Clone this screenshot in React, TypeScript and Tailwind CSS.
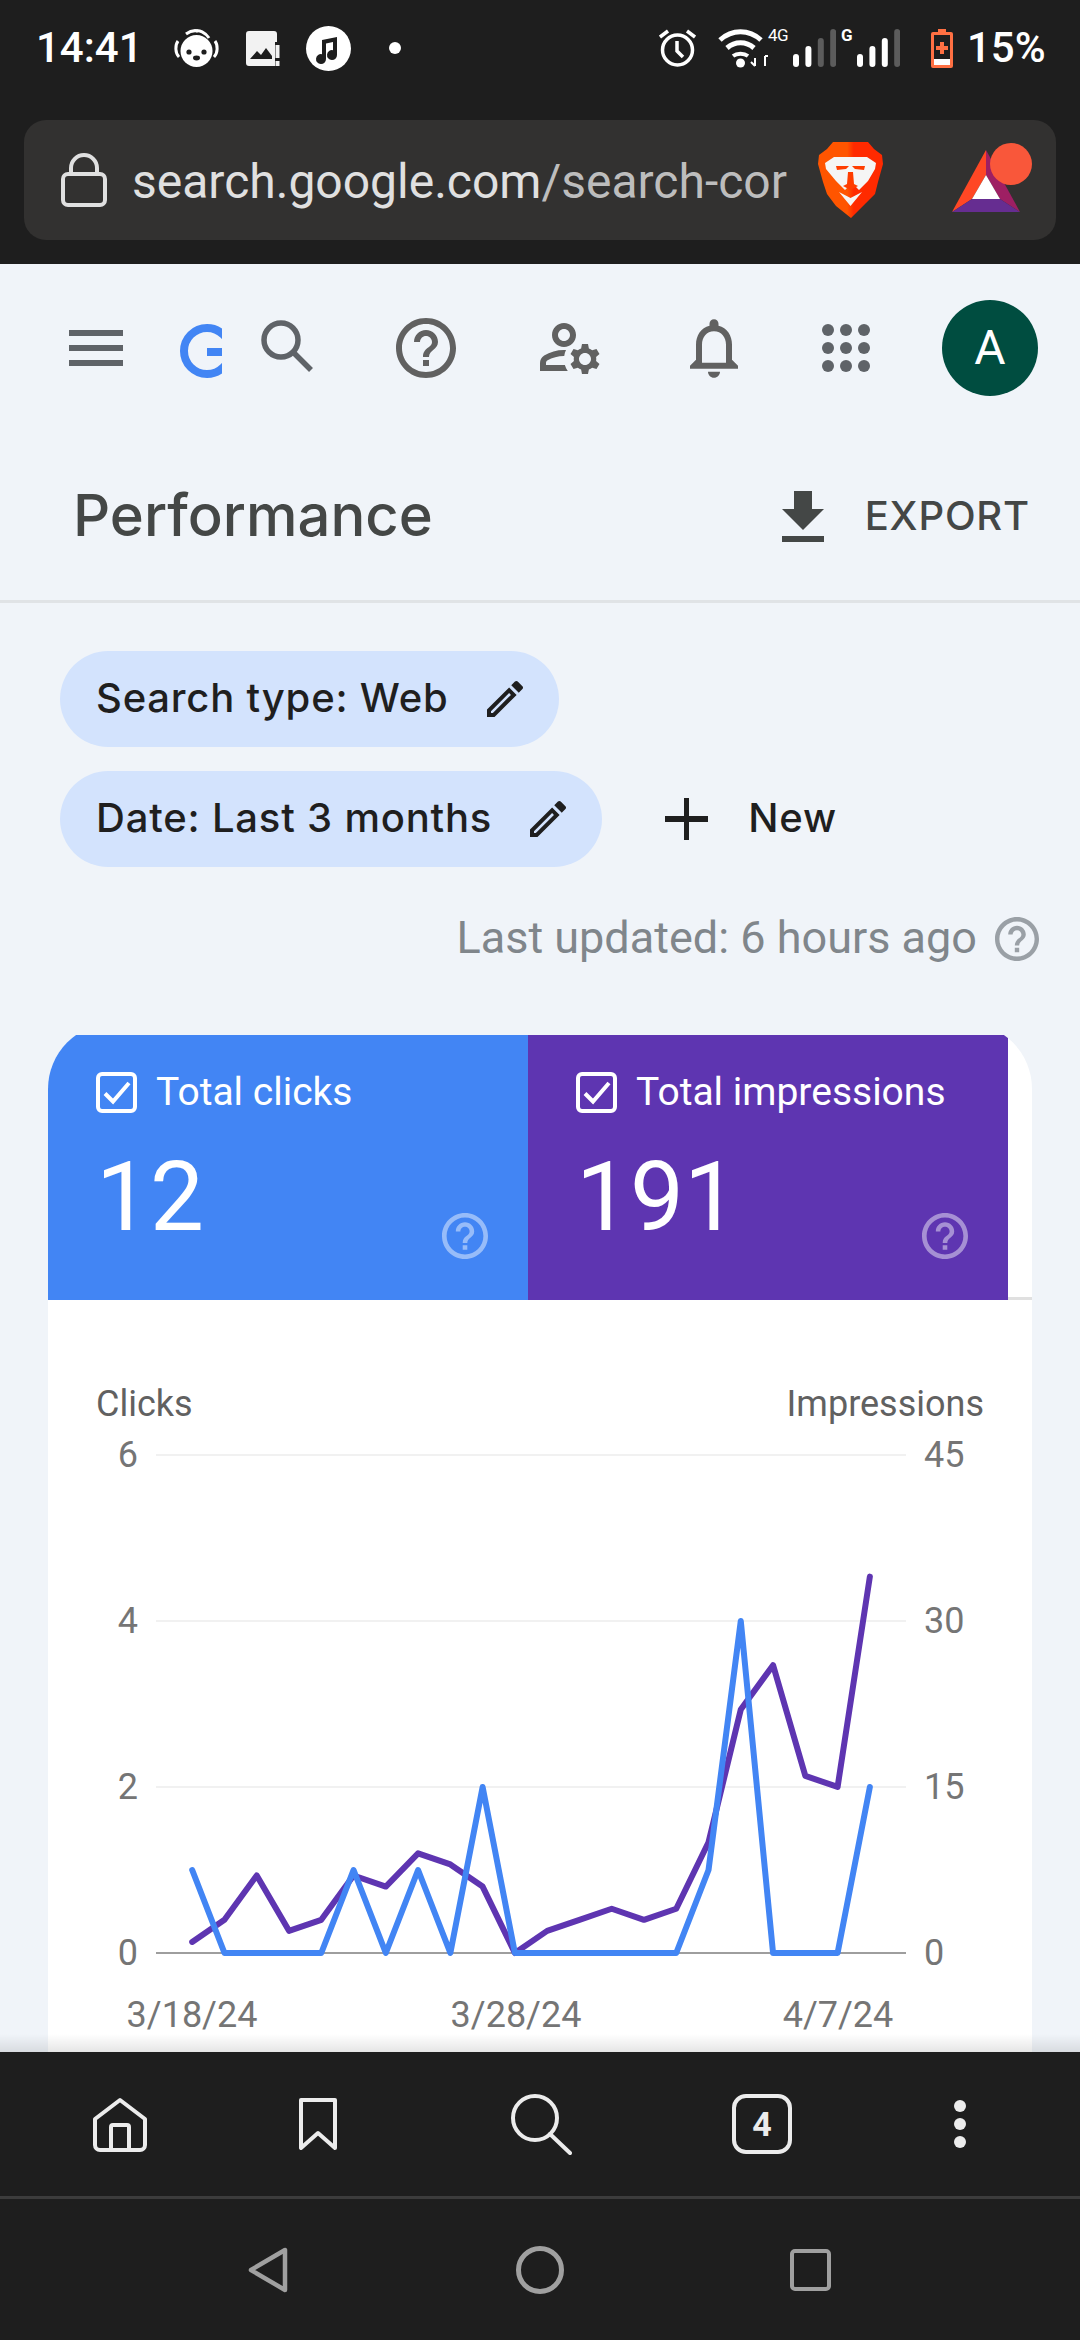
const HELP_PATH =
  'M11 18h2v-2h-2v2zm1-16C6.48 2 2 6.48 2 12s4.48 10 10 10 10-4.48 10-10S17.52 2 12 2zm0 18c-4.41 0-8-3.59-8-8s3.59-8 8-8 8 3.59 8 8-3.59 8-8 8zm0-14c-2.21 0-4 1.79-4 4h2c0-1.1.9-2 2-2s2 .9 2 2c0 2-3 1.75-3 5h2c0-2.25 3-2.5 3-5 0-2.21-1.79-4-4-4z';
const PENCIL_PATH =
  'M14.06 9.02l.92.92L5.92 19H5v-.92l9.06-9.06M17.66 3c-.25 0-.51.1-.7.29l-1.83 1.83 3.75 3.75 1.83-1.83c.39-.39.39-1.02 0-1.41l-2.34-2.34c-.2-.2-.45-.29-.71-.29zm-3.6 3.19L3 17.25V21h3.75L17.81 9.94l-3.75-3.75z';

const clicks = [1, 0, 0, 0, 0, 1, 0, 1, 0, 2, 0, 0, 0, 0, 0, 0, 1, 4, 0, 0, 0, 2];
const impressions = [1, 3, 7, 2, 3, 7, 6, 9, 8, 6, 0, 2, 3, 4, 3, 4, 10, 22, 26, 16, 15, 34];

const BASE_Y = 1953;
const points = (values: number[], perUnit: number) =>
  values.map((v, i) => `${192.2 + 32.27 * i},${BASE_Y - v * perUnit}`).join(' ');

const HelpIcon = ({ className }: { className: string }) => (
  <svg viewBox="2 2 20 20" className={className} fill="currentColor">
    <path d={HELP_PATH} />
  </svg>
);

const PencilIcon = () => (
  <svg viewBox="3 3 18 18" className="w-[36px] h-[36px] shrink-0 text-[#1f1f1f]" fill="currentColor">
    <path d={PENCIL_PATH} />
  </svg>
);

const CheckBox = () => (
  <svg viewBox="0 0 41 41" className="w-[41px] h-[41px] shrink-0" fill="none" stroke="white" strokeWidth="4">
    <rect x="2" y="2" width="37" height="37" rx="4" />
    <path d="M9 21.5 17 29.5 33 11" />
  </svg>
);

const SignalBars = ({ on }: { on: number }) => (
  <svg viewBox="0 0 43 38" className="w-[43px] h-[38px] shrink-0">
    {[25, 17, 9, 0].map((top, i) => (
      <rect key={i} x={i * 12.4} y={top} width="6" height={38 - top} rx="3" fill={i < on ? 'white' : '#5c5c5c'} />
    ))}
  </svg>
);

const StatusBar = () => (
  <div className="h-[96px] flex items-center pl-[36px] text-white">
    <span className="text-[42px] font-medium leading-none w-[138px] shrink-0">14:41</span>
    <svg viewBox="0 0 45 39" className="w-[45px] h-[39px] shrink-0">
      <path d="M5 28C1 24 1 16 4 12M40 28c4-4 4-12 1-16" stroke="white" strokeWidth="3" fill="none" />
      <path d="M22 2c3-1 9 1 13 7" stroke="white" strokeWidth="3" fill="none" />
      <circle cx="22.5" cy="22" r="16" fill="white" />
      <path d="M12 5c4-3 8-4 12-3" stroke="white" strokeWidth="3" fill="none" />
      <circle cx="15" cy="23" r="2.6" fill="#1e1e1e" />
      <circle cx="30" cy="23" r="2.6" fill="#1e1e1e" />
      <ellipse cx="22.5" cy="29" rx="3.5" ry="2.4" fill="#1e1e1e" />
    </svg>
    <svg viewBox="0 0 34 35" className="ml-[27px] w-[34px] h-[35px] shrink-0">
      <path d="M3 0h25a3 3 0 0 1 3 3v12h-2v20H3a3 3 0 0 1-3-3V3a3 3 0 0 1 3-3z" fill="#f2f2f2" />
      <path d="M4 28l7-8 4 4 5-7 6 8v3z" fill="#1e1e1e" />
      <rect x="29" y="11" width="5" height="24" fill="#1e1e1e" />
      <rect x="29.5" y="14" width="4" height="13" fill="#f2f2f2" />
      <rect x="29.5" y="30" width="4" height="5" fill="#f2f2f2" />
    </svg>
    <svg viewBox="0 0 45 45" className="ml-[26px] w-[45px] h-[45px] shrink-0">
      <circle cx="22.5" cy="22.5" r="22.5" fill="white" />
      <path d="M16 14l15-3v18a5 5 0 1 1-4-4.8V16l-7 1.5V33a5 5 0 1 1-4-4.8z" fill="#1e1e1e" />
    </svg>
    <span className="ml-[38px] w-[12px] h-[12px] rounded-full bg-white shrink-0" />
    <svg viewBox="0 0 37 38" className="ml-[258px] w-[37px] h-[38px] shrink-0" fill="none" stroke="white" strokeWidth="3.5">
      <circle cx="18.5" cy="21" r="15" />
      <path d="M18 12v10l6 6M1 8l8-6M36 8l-8-6" />
    </svg>
    <svg viewBox="0 0 50 40" className="ml-[22px] w-[50px] h-[40px] shrink-0" fill="none" stroke="white" strokeWidth="5">
      <path d="M2 12c12-11 29-11 41 0" />
      <path d="M9 20c8-7 19-7 27 0" />
      <path d="M15 28c4-3 11-3 15 0" strokeWidth="4" />
      <circle cx="22.5" cy="35" r="4.5" fill="white" stroke="none" />
      <path d="M37 30v8m-4-4 4 4M47 38v-10m0 0h3" strokeWidth="2" />
    </svg>
    <span className="text-[17px] leading-none self-start mt-[27px] w-[25px] shrink-0 tracking-[-0.5px]">4G</span>
    <SignalBars on={2} />
    <span className="text-[17px] font-bold leading-none self-start mt-[27px] ml-[5px] w-[16px] shrink-0">G</span>
    <SignalBars on={3} />
    <svg viewBox="0 0 22 39" className="ml-[31px] w-[22px] h-[39px] shrink-0">
      <path d="M7 0h8v3h5a2 2 0 0 1 2 2v32a2 2 0 0 1-2 2H2a2 2 0 0 1-2-2V5a2 2 0 0 1 2-2h5z" fill="#ff7043" />
      <rect x="3" y="6" width="16" height="24" fill="#1e1e1e" />
      <rect x="3" y="30" width="16" height="6" fill="white" />
      <path d="M9 13h4v4h4v4h-4v4H9v-4H5v-4h4z" fill="#ff7043" />
    </svg>
    <span className="ml-[14px] text-[42px] font-medium leading-none">15%</span>
  </div>
);

const BraveLogo = () => (
  <svg viewBox="0 0 65 76" className="ml-[32px] w-[65px] h-[76px] shrink-0">
    <defs>
      <linearGradient id="brave" x1="0" x2="1">
        <stop offset="0.45" stopColor="#ff5500" />
        <stop offset="0.55" stopColor="#ff2a00" />
      </linearGradient>
    </defs>
    <path d="M15 0h35l6 7 8 6 1 9-5 18-3 12-9 9-15 15-15-12-9-12-4-12L0 22l1-9 8-6z" fill="url(#brave)" />
    <path d="M16 15h33l9 6-1 6-7 12-9 9-3-3H30l-3 3-9-9-10-12-1-6z" fill="#f5f5f5" />
    <path d="M18 24h13l-3 3-9 1zM47 24H34l3 3 9 1zM30 30h5l1 12 4 2-7.500 4-7.500-4 4-2z" fill="#ff3d00" />
    <path d="M21 50l11.500 6L44 50l-11.500 14z" fill="#f5f5f5" />
  </svg>
);

const AddressBar = () => (
  <div className="mx-[24px] h-[120px] rounded-[22px] bg-[#323130] flex items-center">
    <svg viewBox="0 0 46 54" className="ml-[37px] w-[46px] h-[54px] shrink-0" fill="none" stroke="#e0e0e0" strokeWidth="4">
      <rect x="2" y="21" width="42" height="31" rx="5" />
      <path d="M10 21v-6a13 13 0 0 1 26 0v6" />
    </svg>
    <div className="ml-[25px] mt-[4px] w-[654px] whitespace-nowrap text-[48px] leading-none text-[#bdbdbd] shrink-0">
      <span className="text-[#e0e0e0]">search.google.com</span>/search-cor
    </div>
    <BraveLogo />
    <svg viewBox="0 0 80 72" className="ml-[69px] w-[80px] h-[72px] shrink-0 -mt-[2px]">
      <path d="M34 7 0 69 20 56 34 32z" fill="#ff4724" />
      <path d="M34 7v25l14 24 20 13z" fill="#9e1f63" />
      <path d="M0 69 20 56h28l20 13z" fill="#662d91" />
      <path d="M34 32 20 56h28z" fill="white" />
      <circle cx="59" cy="21" r="21" fill="#f9573a" />
    </svg>
  </div>
);

const TopBar = () => (
  <div className="h-[168px] flex items-center pl-[69px] text-[#5f6368]">
    <div className="w-[54px] flex flex-col gap-[9px] shrink-0">
      <span className="h-[6px] bg-[#5f6368]" />
      <span className="h-[6px] bg-[#5f6368]" />
      <span className="h-[6px] bg-[#5f6368]" />
    </div>
    <svg viewBox="0 0 42 54" className="ml-[57px] mt-[6px] w-[42px] h-[54px] shrink-0">
      <circle cx="27" cy="27" r="23" fill="none" stroke="#4285f4" strokeWidth="8" />
      <rect x="27" y="24" width="15" height="8" fill="#4285f4" />
    </svg>
    <svg viewBox="0 0 52 52" className="ml-[39px] -mt-[5px] w-[52px] h-[52px] shrink-0" fill="none" stroke="currentColor" strokeWidth="5.5">
      <circle cx="20" cy="20" r="17" />
      <path d="M32 32 50 50" />
    </svg>
    <HelpIcon className="ml-[83px] w-[60px] h-[60px] shrink-0 text-[#616161]" />
    <svg viewBox="2 4 20 17" className="ml-[84px] w-[60px] h-[51px] shrink-0 text-[#616161]" fill="currentColor">
      <path d="M4 18v-.65c0-.34.16-.66.41-.81C6.1 15.53 8.03 15 10 15c.03 0 .05 0 .08.01.1-.7.3-1.37.59-1.98-.22-.02-.44-.03-.67-.03-2.42 0-4.68.67-6.61 1.82-.88.52-1.39 1.5-1.39 2.53V20h9.26c-.42-.6-.75-1.28-.97-2H4zM10 12c2.21 0 4-1.79 4-4s-1.79-4-4-4-4 1.79-4 4 1.79 4 4 4zm0-6c1.1 0 2 .9 2 2s-.9 2-2 2-2-.9-2-2 .9-2 2-2zM20.75 16c0-.22-.03-.42-.06-.63l1.14-1.01-1-1.73-1.45.49c-.32-.27-.68-.48-1.08-.63L18 11h-2l-.3 1.49c-.4.15-.76.36-1.08.63l-1.45-.49-1 1.73 1.14 1.01c-.03.21-.06.41-.06.63s.03.42.06.63l-1.14 1.01 1 1.73 1.45-.49c.32.27.68.48 1.08.63L16 21h2l.3-1.49c.4-.15.76-.36 1.08-.63l1.45.49 1-1.73-1.14-1.01c.03-.21.06-.41.06-.63zM17 18c-1.1 0-2-.9-2-2s.9-2 2-2 2 .9 2 2-.9 2-2 2z" />
    </svg>
    <svg viewBox="4 2.5 16 19.5" className="ml-[90px] w-[48px] h-[59px] shrink-0 text-[#616161]" fill="currentColor">
      <path d="M12 22c1.1 0 2-.9 2-2h-4c0 1.1.9 2 2 2zm6-6v-5c0-3.07-1.63-5.64-4.5-6.32V4c0-.83-.67-1.5-1.5-1.5s-1.5.67-1.5 1.5v.68C7.64 5.36 6 7.92 6 11v5l-2 2v1h16v-1l-2-2zm-2 1H8v-6c0-2.48 1.51-4.5 4-4.5s4 2.02 4 4.5v6z" />
    </svg>
    <div className="ml-[84px] w-[48px] grid grid-cols-3 gap-[6px] shrink-0">
      {Array.from({ length: 9 }).map((_, i) => (
        <span key={i} className="w-[12px] h-[12px] rounded-full bg-[#5f6368]" />
      ))}
    </div>
    <div className="ml-[72px] w-[96px] h-[96px] rounded-full bg-[#004d40] text-white flex items-center justify-center text-[48px] shrink-0">A</div>
  </div>
);

const TitleBar = () => (
  <div className="h-[171px] border-b-[3px] border-[#e0e3e6] flex items-center pl-[73px] pr-[50px]">
    <h1 className="text-[58px] font-medium leading-none text-[#444746] font-[Inter] -mt-[3px]">Performance</h1>
    <svg viewBox="5 3 14 17" className="ml-auto w-[42px] h-[51px] shrink-0 text-[#444746]" fill="currentColor">
      <path d="M19 9h-4V3H9v6H5l7 7 7-7zM5 18v2h14v-2H5z" />
    </svg>
    <span className="ml-[41px] text-[40px] font-medium leading-none tracking-[0.8px] text-[#444746] font-[Inter]">EXPORT</span>
  </div>
);

const Filters = () => (
  <div className="pt-[48px] pl-[60px] flex flex-col items-start gap-[24px] font-[Inter] font-medium text-[#1f1f1f]">
    <div className="h-[96px] rounded-full bg-[#d3e3fd] flex items-center pl-[36px] pr-[36px] gap-[38px]">
      <span className="text-[40px] leading-none tracking-[0.8px] -mt-[3px]">Search type: Web</span>
      <PencilIcon />
    </div>
    <div className="flex items-center">
      <div className="h-[96px] rounded-full bg-[#d3e3fd] flex items-center pl-[36px] pr-[36px] gap-[38px]">
        <span className="text-[40px] leading-none tracking-[0.8px] -mt-[3px]">Date: Last 3 months</span>
        <PencilIcon />
      </div>
      <svg viewBox="0 0 43 42" className="ml-[63px] w-[43px] h-[42px] shrink-0" fill="#1f1f1f">
        <rect x="0" y="18" width="43" height="6" />
        <rect x="19" y="0" width="5" height="42" />
      </svg>
      <span className="ml-[40px] text-[40px] leading-none tracking-[0.8px] -mt-[3px]">New</span>
    </div>
  </div>
);

const MetricTile = ({ label, value, bg, width }: { label: string; value: string; bg: string; width: string }) => (
  <div className={`h-[277px] shrink-0 pl-[48px] pr-[40px] pt-[49px] pb-[41px] flex flex-col text-white ${bg} ${width}`}>
    <div className="flex items-center gap-[19px]">
      <CheckBox />
      <span className="text-[39px] leading-none whitespace-nowrap">{label}</span>
    </div>
    <div className="mt-auto flex items-end justify-between">
      <span className="text-[96px] leading-[98px] mb-[13px]">{value}</span>
      <HelpIcon className="w-[46px] h-[46px] text-white/45" />
    </div>
  </div>
);

const Chart = () => (
  <svg viewBox="48 1420 984 632" className="w-[984px] h-[632px] block font-[Roboto]">
    {[1455, 1621, 1787].map((y) => (
      <line key={y} x1="156" x2="906" y1={y} y2={y} stroke="#f1f1f1" strokeWidth="2" />
    ))}
    <line x1="156" x2="906" y1={BASE_Y} y2={BASE_Y} stroke="#9e9e9e" strokeWidth="2" />
    <g fill="#757575" fontSize="36">
      {[
        ['6', 1467],
        ['4', 1633],
        ['2', 1799],
        ['0', 1965],
      ].map(([t, y]) => (
        <text key={t} x="138" y={y} textAnchor="end">
          {t}
        </text>
      ))}
      {[
        ['45', 1467],
        ['30', 1633],
        ['15', 1799],
        ['0', 1965],
      ].map(([t, y]) => (
        <text key={t} x="924" y={y}>
          {t}
        </text>
      ))}
      <text x="192" y="2027" textAnchor="middle">3/18/24</text>
      <text x="516" y="2027" textAnchor="middle">3/28/24</text>
      <text x="838" y="2027" textAnchor="middle">4/7/24</text>
    </g>
    <polyline points={points(impressions, 11.07)} fill="none" stroke="#5e35b1" strokeWidth="6" strokeLinecap="round" strokeLinejoin="round" />
    <polyline points={points(clicks, 83)} fill="none" stroke="#4285f4" strokeWidth="6" strokeLinecap="round" strokeLinejoin="round" />
  </svg>
);

const Card = () => (
  <div className="mt-[72px] mx-[48px] overflow-hidden">
    <div className="-mt-[12px] rounded-t-[66px] bg-white overflow-hidden">
      <div className="flex h-[277px] border-b-[3px] border-[#e0e0e0]">
        <MetricTile label="Total clicks" value="12" bg="bg-[#4285f4]" width="w-[480px]" />
        <MetricTile label="Total impressions" value="191" bg="bg-[#5e35b1]" width="w-[480px]" />
      </div>
      <div className="pt-[88px] pl-[48px] pr-[48px] flex justify-between text-[36px] leading-[32px] text-[#616161]">
        <span>Clicks</span>
        <span>Impressions</span>
      </div>
      <Chart />
    </div>
  </div>
);

const BottomNav = () => (
  <div className="h-[144px] flex items-center pl-[93px] text-[#ececec]">
    <svg viewBox="0 0 54 55" className="w-[54px] h-[55px] shrink-0" fill="none" stroke="currentColor" strokeWidth="4" strokeLinejoin="round">
      <path d="M27 3 52 22V48a5 5 0 0 1-5 5H7a5 5 0 0 1-5-5V22z" />
      <path d="M18 53V30a2 2 0 0 1 2-2h14a2 2 0 0 1 2 2v23" />
    </svg>
    <svg viewBox="0 0 38 52" className="ml-[152px] w-[38px] h-[52px] shrink-0" fill="none" stroke="currentColor" strokeWidth="4" strokeLinejoin="round">
      <path d="M2 2h34v48L19 35 2 50z" />
    </svg>
    <svg viewBox="0 0 61 61" className="ml-[174px] w-[61px] h-[61px] shrink-0" fill="none" stroke="currentColor" strokeWidth="4" strokeLinecap="round">
      <circle cx="24" cy="24" r="22" />
      <path d="M39 40 59 59" />
    </svg>
    <div className="ml-[160px] w-[60px] h-[60px] rounded-[14px] border-[4px] border-[#ececec] flex items-center justify-center text-[34px] font-bold leading-none shrink-0">
      4
    </div>
    <div className="ml-[162px] w-[12px] flex flex-col gap-[6px] shrink-0">
      <span className="w-[12px] h-[12px] rounded-full bg-[#ececec]" />
      <span className="w-[12px] h-[12px] rounded-full bg-[#ececec]" />
      <span className="w-[12px] h-[12px] rounded-full bg-[#ececec]" />
    </div>
  </div>
);

const SystemNav = () => (
  <div className="flex-1 flex items-center pl-[248px] border-t-[3px] border-[#3c3c3c]">
    <svg viewBox="0 0 40 46" className="w-[40px] h-[46px] shrink-0" fill="none" stroke="#a0a0a0" strokeWidth="4.5" strokeLinejoin="round">
      <path d="M37 3V43L3 23z" />
    </svg>
    <span className="ml-[228px] w-[48px] h-[48px] rounded-full border-[5px] border-[#a0a0a0] shrink-0" />
    <span className="ml-[226px] w-[41px] h-[42px] rounded-[5px] border-[4.5px] border-[#a0a0a0] shrink-0" />
  </div>
);

export default function App() {
  return (
    <div className="w-[1080px] h-[2340px] flex flex-col overflow-hidden bg-[#1e1e1e] font-[Roboto]">
      <header className="h-[264px] shrink-0">
        <StatusBar />
        <div className="mt-[24px]">
          <AddressBar />
        </div>
      </header>
      <main className="relative flex-1 min-h-0 overflow-hidden bg-[#f0f4f9]">
        <TopBar />
        <TitleBar />
        <Filters />
        <div className="mt-[48px] h-[48px] pr-[41px] flex items-center justify-end gap-[18px] text-[#80868b]">
          <span className="text-[45px] leading-none -mt-[3px]">Last updated: 6 hours ago</span>
          <HelpIcon className="w-[44px] h-[44px] text-[#9aa0a6]" />
        </div>
        <Card />
        <div className="absolute inset-x-0 bottom-0 h-[18px] bg-gradient-to-b from-transparent to-black/10" />
      </main>
      <footer className="h-[288px] shrink-0 flex flex-col">
        <BottomNav />
        <SystemNav />
      </footer>
    </div>
  );
}
